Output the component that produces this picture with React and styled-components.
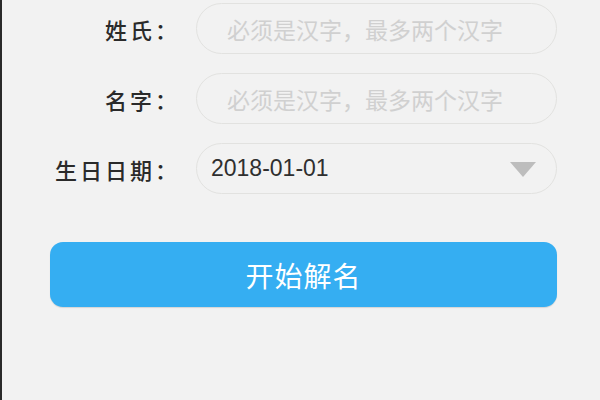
import React from "react";
import styled, { createGlobalStyle } from "styled-components";

const Global = createGlobalStyle`
  html, body { margin: 0; padding: 0; background: #f2f2f2; }
  body {
    font-family: "Noto Sans CJK SC", "Noto Sans", sans-serif;
    width: 600px; height: 400px; overflow: hidden;
  }
`;

const Page = styled.div`
  box-sizing: border-box;
  width: 600px;
  height: 400px;
  background: #f2f2f2;
  border-left: 2px solid #2a2a2a;
  padding: 3px 43px 0 48px;
  display: flex;
  flex-direction: column;
`;

const Form = styled.div`
  display: flex;
  flex-direction: column;
  gap: 19px;
`;

const Row = styled.div`
  display: flex;
  align-items: center;
  gap: 16px;
  padding-left: 4px;
`;

const Label = styled.div`
  width: 126px;
  text-align: right;
  font-size: 22px;
  font-weight: 500;
  letter-spacing: 3px;
  color: #2a2a2a;
  white-space: nowrap;
  line-height: 1;
`;

const Field = styled.div`
  box-sizing: border-box;
  width: 361px;
  height: 51px;
  border: 1.5px solid #e2e2e0;
  border-radius: 26px;
  display: flex;
  align-items: center;
  justify-content: ${(p) => (p.$select ? "space-between" : "flex-start")};
  padding: ${(p) => (p.$select ? "0 20px 0 14px" : "0 0 0 30px")};
  font-size: 23px;
  color: ${(p) => (p.$placeholder ? "#d0d0d0" : "#333")};
  white-space: nowrap;
`;

const DateText = styled.span`
  font-family: "Liberation Sans", "Noto Sans", sans-serif;
  font-size: 23px;
  color: #2f2f2f;
`;

const Arrow = styled.span`
  width: 0;
  height: 0;
  border-left: 13px solid transparent;
  border-right: 13px solid transparent;
  border-top: 15px solid #bdbdbd;
  margin-top: 2px;
`;

const Button = styled.button`
  margin-top: 48px;
  box-sizing: border-box;
  width: 507px;
  height: 65px;
  border: none;
  border-radius: 13px;
  background: #35aef2;
  box-shadow: 0 1px 1px rgba(0, 0, 0, 0.12);
  color: #fff;
  font-family: "Noto Sans CJK SC", sans-serif;
  font-size: 28px;
  letter-spacing: 1px;
  display: flex;
  align-items: center;
  justify-content: center;
  padding: 0;
`;

export default function App() {
  return (
    <>
      <Global />
      <Page>
        <Form>
          <Row>
            <Label>姓氏：</Label>
            <Field $placeholder>必须是汉字，最多两个汉字</Field>
          </Row>
          <Row>
            <Label>名字：</Label>
            <Field $placeholder>必须是汉字，最多两个汉字</Field>
          </Row>
          <Row>
            <Label>生日日期：</Label>
            <Field $select>
              <DateText>2018-01-01</DateText>
              <Arrow />
            </Field>
          </Row>
        </Form>
        <Button>开始解名</Button>
      </Page>
    </>
  );
}
